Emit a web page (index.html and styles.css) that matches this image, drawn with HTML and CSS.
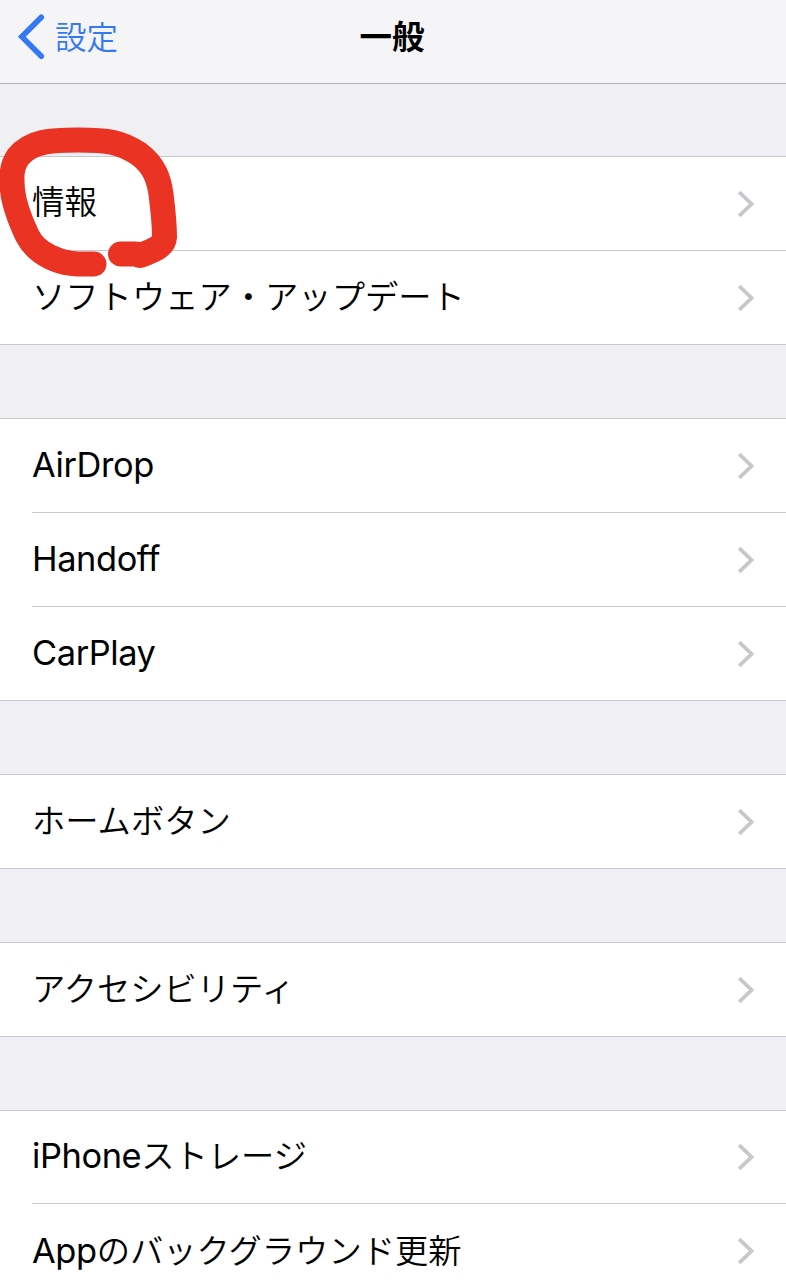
FILE: index.html
```html
<!DOCTYPE html>
<html lang="ja">
<head>
    <meta charset="UTF-8">
    <meta name="viewport" content="width=device-width, initial-scale=1.0">
    <title>一般</title>
    <link rel="stylesheet" href="styles.css">
</head>
<body>
    <svg width="0" height="0" class="defs">
        <symbol id="chevron" viewBox="0 0 18 28">
            <path d="M2.2 2.2 L14.5 14 L2.2 25.8" fill="none" stroke="#c7c7cc" stroke-width="3.8"/>
        </symbol>
    </svg>

    <div class="screen">
        <header class="navbar">
            <a class="back">
                <svg class="back-icon" viewBox="0 0 28 46"><path d="M23.3 3.2 L3.8 22.7 L23.3 42.2" fill="none" stroke="#3478f6" stroke-width="5.6" stroke-linecap="round"/></svg>
                <span>設定</span>
            </a>
            <h1>一般</h1>
        </header>

        <main>
            <ul class="group">
                <li class="row"><span class="kanji">情報</span><svg class="chevron"><use href="#chevron"/></svg></li>
                <li class="row"><span>ソフトウェア・アップデート</span><svg class="chevron"><use href="#chevron"/></svg></li>
            </ul>

            <ul class="group">
                <li class="row"><span class="en">AirDrop</span><svg class="chevron"><use href="#chevron"/></svg></li>
                <li class="row"><span class="en">Handoff</span><svg class="chevron"><use href="#chevron"/></svg></li>
                <li class="row"><span class="en">CarPlay</span><svg class="chevron"><use href="#chevron"/></svg></li>
            </ul>

            <ul class="group">
                <li class="row"><span>ホームボタン</span><svg class="chevron"><use href="#chevron"/></svg></li>
            </ul>

            <ul class="group">
                <li class="row"><span>アクセシビリティ</span><svg class="chevron"><use href="#chevron"/></svg></li>
            </ul>

            <ul class="group">
                <li class="row short"><span><span class="en">iPhone</span>ストレージ</span><svg class="chevron"><use href="#chevron"/></svg></li>
                <li class="row"><span><span class="en">App</span>のバックグラウンド更新</span><svg class="chevron"><use href="#chevron"/></svg></li>
            </ul>
        </main>

        <!-- 手書きの赤丸 -->
        <svg class="marker" viewBox="0 0 190 290">
            <path d="M94 264 C77 264.5 64 264 50 257 C38 251 32 245 27 235 C20 220 14 205 12.5 190 C11.5 177 11 167 18 157 C31 141 51 140 78 140 C108 140 121 142 139 154 C155 166 159 180 161 194 C163 210 164.500 226 164.500 237 C164 246 155 250 140 255.500 L136 254 L120.500 254"/>
        </svg>
    </div>
</body>
</html>
```

FILE: styles.css
```css
* {
    box-sizing: border-box;
}

body {
    margin: 0;
    background: #efeff4;
    color: #000;
    font-family: Inter, 'Noto Sans CJK JP', sans-serif;
    font-size: 33.3px;
    line-height: 48px;
}

.defs {
    display: block;
}

.screen {
    position: relative;
    height: 1280px;
    overflow: hidden;
}

.navbar {
    display: grid;
    grid-template-columns: 1fr auto 1fr;
    align-items: center;
    height: 84px;
    padding: 0 20px 10px 18px;
    background: #f5f5f7;
    border-bottom: 1px solid #b2b2b6;
}

.navbar h1 {
    margin: 0;
    padding-top: 2px;
    font-size: 32.5px;
    font-weight: 700;
}

.back {
    display: flex;
    align-items: center;
    gap: 9px;
    color: #3478f6;
    font-size: 31.5px;
    font-weight: 350;
}

.back span {
    padding-top: 2px;
}

.back-icon {
    width: 28px;
    height: 46px;
}

.group {
    list-style: none;
    margin: 72px 0 73px;
    padding: 0 0 0 32px;
    background: #fff;
    border-top: 1px solid #c8c7cc;
    border-bottom: 1px solid #c8c7cc;
}

.group + .group {
    margin-top: 0;
}

.row {
    display: flex;
    align-items: center;
    justify-content: space-between;
    height: 93px;
    padding-right: 31px;
    font-weight: 350;
}

.row > span {
    padding-bottom: 2px;
}

.row + .row {
    height: 94px;
    border-top: 1px solid #c8c7cc;
}

.row.short {
    height: 92px;
}

.short + .row > span {
    padding-bottom: 0;
}

.kanji {
    font-size: 32.5px;
}

.en {
    font-size: 34.4px;
    font-weight: 400;
    letter-spacing: -0.4px;
}

.chevron {
    width: 18px;
    height: 28px;
}

.marker {
    position: absolute;
    left: 0;
    top: 0;
    width: 190px;
    height: 290px;
    fill: none;
    stroke: #eb3323;
    stroke-width: 25px;
    stroke-linecap: round;
    stroke-linejoin: round;
}
```
